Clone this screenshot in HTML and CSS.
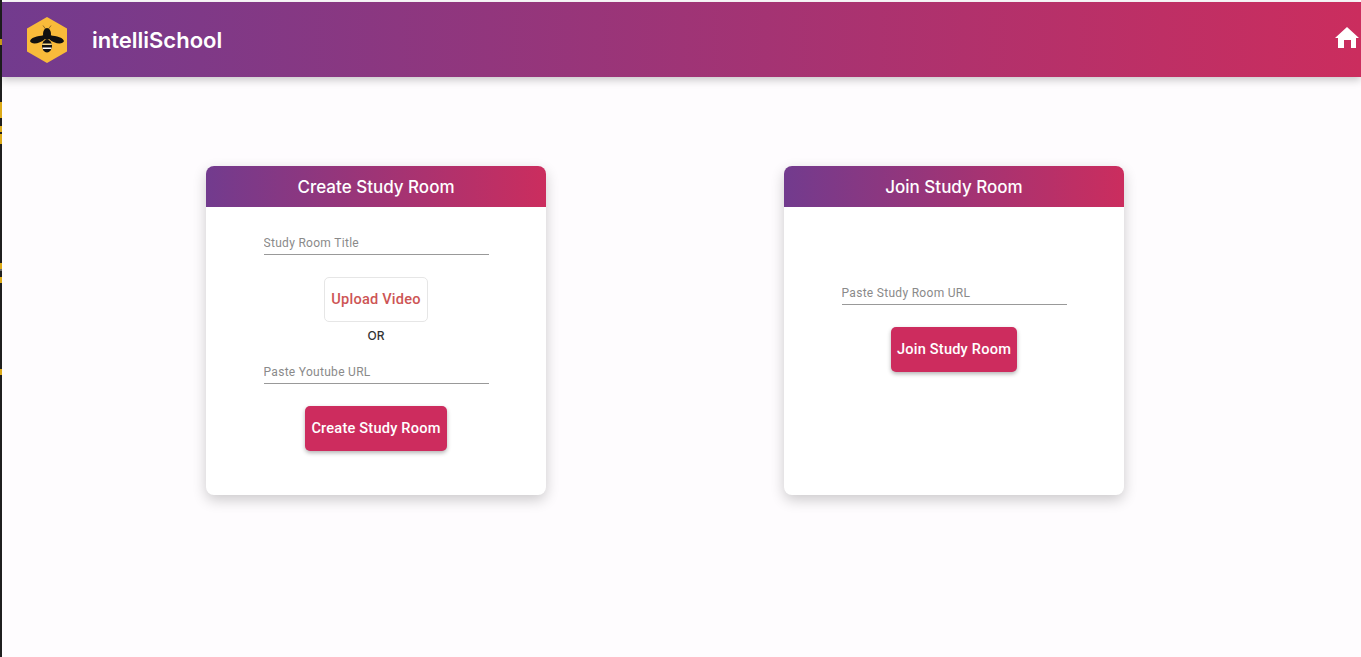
FILE: index.html
```html
<!DOCTYPE html>
<html lang="en">
<head>
    <meta charset="UTF-8">
    <meta name="viewport" content="width=device-width, initial-scale=1.0">
    <title>intelliSchool</title>
    <link rel="stylesheet" href="styles.css">
</head>
<body>
    <div class="edge-strip"></div>

    <div class="page">
        <header class="top-bar">
            <a href="#" class="brand">
                <svg class="brand-logo" viewBox="0 0 40 46" aria-hidden="true">
                    <polygon points="20,0 40,11.5 40,34.5 20,46 0,34.5 0,11.5" fill="#f9bb3a"/>
                    <path d="M18.5 12 L16 8.5 M21.5 12 L24 8.5" stroke="#7a5a20" stroke-width="0.8" fill="none"/>
                    <ellipse cx="20" cy="17" rx="4" ry="6" fill="#111"/>
                    <path d="M18 18 C14 19 5 19 3 24 C4 28 13 27 18 22 Z" fill="#111"/>
                    <path d="M22 18 C26 19 35 19 37 24 C36 28 27 27 22 22 Z" fill="#111"/>
                    <ellipse cx="20" cy="29" rx="5" ry="6.5" fill="#111"/>
                    <path d="M15.2 26.5 H24.8 V28 H15.2 Z" fill="#f6d98a"/>
                    <path d="M15.6 30.5 H24.4 V32 H15.6 Z" fill="#fff"/>
                </svg>
                <span class="brand-name">intelliSchool</span>
            </a>
            <a href="#" class="home-link" aria-label="Home">
                <svg viewBox="0 0 24 21" aria-hidden="true">
                    <path d="M12 0 L24 11 H21 V21 H16 V13 H9 V21 H3 V11 H0 Z" fill="#fff"/>
                </svg>
            </a>
        </header>

        <main class="rooms">
            <section class="room-card">
                <h2 class="room-title">Create Study Room</h2>
                <div class="room-body">
                    <input class="room-input" type="text" placeholder="Study Room Title">
                    <button class="upload-button">Upload Video</button>
                    <div class="or-label">OR</div>
                    <input class="room-input" type="text" placeholder="Paste Youtube URL">
                    <button class="room-button">Create Study Room</button>
                </div>
            </section>

            <section class="room-card">
                <h2 class="room-title">Join Study Room</h2>
                <div class="room-body join-body">
                    <input class="room-input" type="text" placeholder="Paste Study Room URL">
                    <button class="room-button">Join Study Room</button>
                </div>
            </section>
        </main>
    </div>
</body>
</html>
```

FILE: styles.css
```css
* {
    margin: 0;
    padding: 0;
    box-sizing: border-box;
}

body {
    display: flex;
    height: 657px;
    overflow: hidden;
    background: #fefcfe;
    font-family: Roboto, sans-serif;
    color: #222;
}

/* dark sliver at the left of the window, with the yellow marks */
.edge-strip {
    flex: 0 0 2px;
    background: linear-gradient(180deg,
        #1f1f1f 0, #1f1f1f 39px, #dcaa18 39px, #dcaa18 45px,
        #1f1f1f 45px, #1f1f1f 102px, #dcaa18 102px, #dcaa18 118px,
        #1f1f1f 118px, #1f1f1f 126px, #dcaa18 126px, #dcaa18 132px,
        #1f1f1f 132px, #1f1f1f 134px, #dcaa18 134px, #dcaa18 144px,
        #1f1f1f 144px, #1f1f1f 263px, #dcaa18 263px, #dcaa18 269px,
        #6b6b6b 269px, #6b6b6b 271px, #1f1f1f 271px, #1f1f1f 277px,
        #dcaa18 277px, #dcaa18 283px, #1f1f1f 283px, #1f1f1f 369px,
        #dcaa18 369px, #dcaa18 375px, #1f1f1f 375px);
}

.page {
    flex: 1;
    min-width: 0;
    padding-top: 2px;
}

.top-bar {
    display: flex;
    align-items: center;
    justify-content: space-between;
    height: 75px;
    padding: 0 2px 0 25px;
    background: linear-gradient(90deg, #723b8e, #cb2d5e);
    box-shadow: 0 3px 8px rgba(0,0,0,0.22);
}

.brand {
    display: flex;
    align-items: center;
    gap: 25px;
    color: white;
    text-decoration: none;
}

.brand-logo {
    width: 40px;
    height: 46px;
}

.brand-name {
    font-family: Inter, sans-serif;
    font-size: 22px;
    font-weight: 600;
}

.home-link {
    display: block;
    width: 24px;
    height: 21px;
    margin-top: -4px;
}

.home-link svg {
    display: block;
    width: 24px;
    height: 21px;
}

.rooms {
    display: flex;
    gap: 238px;
    padding: 89px 0 0 204px;
}

.room-card {
    width: 340px;
    height: 329px;
    background: white;
    border-radius: 8px;
    overflow: hidden;
    box-shadow: 0 5px 14px rgba(0,0,0,0.2);
}

.room-title {
    height: 41px;
    line-height: 42px;
    text-align: center;
    font-family: Inter, sans-serif;
    font-size: 17px;
    font-weight: 500;
    color: white;
    background: linear-gradient(90deg, #723b8e, #cb2d5e);
}

.room-body {
    display: flex;
    flex-direction: column;
    align-items: center;
    padding-top: 26px;
}

.join-body {
    padding-top: 76px;
}

.room-input {
    display: block;
    width: 225px;
    height: 22px;
    padding-bottom: 2px;
    border: none;
    border-bottom: 1px solid #999;
    outline: none;
    background: transparent;
    font-family: Roboto, sans-serif;
    font-size: 12px;
    letter-spacing: 0.3px;
}

.room-input::placeholder {
    color: #8a8a8a;
    opacity: 1;
}

.upload-button {
    width: 104px;
    height: 45px;
    margin-top: 22px;
    padding-bottom: 2px;
    background: white;
    border: 1px solid #e6e6e6;
    border-radius: 5px;
    font-family: Roboto, sans-serif;
    font-size: 14.6px;
    font-weight: 500;
    letter-spacing: 0.2px;
    color: #cd5555;
}

.or-label {
    margin-top: 6px;
    margin-bottom: 19px;
    font-family: Inter, sans-serif;
    font-size: 12px;
    font-weight: 500;
    line-height: 15px;
    color: #333;
}

.room-button {
    height: 45px;
    margin-top: 22px;
    padding: 0 6px 2px;
    background: #cd2c5e;
    border: none;
    border-radius: 5px;
    box-shadow: 0 2px 4px rgba(0,0,0,0.3);
    font-family: Roboto, sans-serif;
    font-size: 14.6px;
    font-weight: 500;
    letter-spacing: 0.2px;
    color: white;
}
```
